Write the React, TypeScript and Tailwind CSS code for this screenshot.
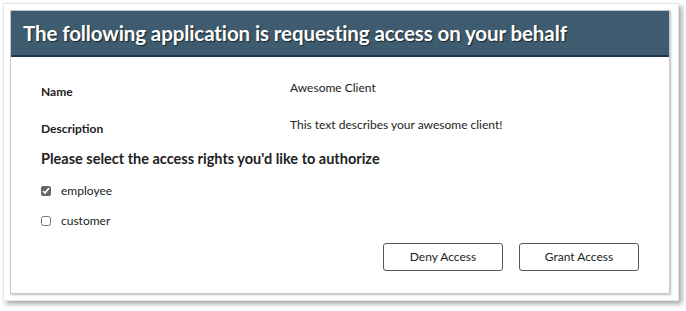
export default function App() {
  return (
    <div className="w-[686px] h-[311px] bg-white p-[3px] font-['Lato',sans-serif]">
      <div className="w-[676px] h-[298px] border border-[#e6e6e6] bg-white shadow-[3px_3px_5px_rgba(0,0,0,0.35)] pt-[6px] pl-[6px]">
        <div className="w-[660px] h-[284px] border border-[#c8c8c8] flex flex-col shadow-[1px_1px_2px_rgba(0,0,0,0.25)]">
          <div className="h-[46px] bg-[#3e5b6f] border-b-2 border-[#22384a] flex items-center pl-[12px]">
            <h1 className="text-white text-[20.5px] font-bold tracking-[-0.1px] [text-shadow:1px_1px_1px_rgba(0,0,0,0.6)]">
              The following application is requesting access on your behalf
            </h1>
          </div>
          <div className="flex-1 pl-[30px] pr-[30px] text-[12px] text-[#222]">
            <div className="flex mt-[22px]">
              <div className="w-[249px] pt-[4px] font-bold">Name</div>
              <div>Awesome Client</div>
            </div>
            <div className="flex mt-[15px]">
              <div className="w-[249px] pt-[4px] font-bold">Description</div>
              <div>This text describes your awesome client!</div>
            </div>
            <h2 className="mt-[10px] text-[14.5px] font-bold text-[#222]">
              Please select the access rights you'd like to authorize
            </h2>
            <div className="mt-[12px] flex flex-col gap-[12px]">
              <label className="flex items-center gap-[10px]">
                <input type="checkbox" defaultChecked className="w-[10px] h-[10px] accent-[#666]" />
                <span>employee</span>
              </label>
              <label className="flex items-center gap-[10px]">
                <input type="checkbox" className="w-[10px] h-[10px]" />
                <span>customer</span>
              </label>
            </div>
            <div className="flex justify-end gap-[16px] mt-[13px]">
              <button className="w-[120px] h-[28px] border border-[#555] rounded-[3px] text-[12px] text-[#222] bg-white">Deny Access</button>
              <button className="w-[120px] h-[28px] border border-[#555] rounded-[3px] text-[12px] text-[#222] bg-white">Grant Access</button>
            </div>
          </div>
        </div>
      </div>
    </div>
  );
}
